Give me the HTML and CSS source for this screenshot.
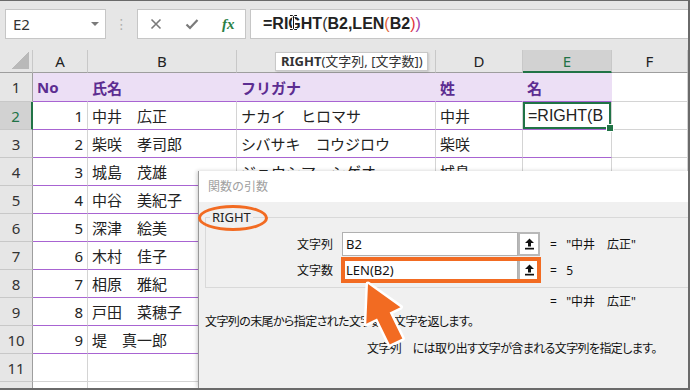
FILE: index.html
```html
<!DOCTYPE html>
<html lang="ja">
<head>
    <meta charset="UTF-8">
    <title>関数の引数 - RIGHT</title>
    <link rel="stylesheet" href="styles.css">
</head>
<body>
<div class="screen">

    <!-- formula bar -->
    <div class="formula-bar">
        <div class="name-box"><span>E2</span><span class="caret"></span></div>
        <div class="grip">⋮</div>
        <div class="fx-box">
            <svg width="12" height="12" viewBox="0 0 12 12"><path d="M1.5 1.5 L10.5 10.5 M10.5 1.5 L1.5 10.5" stroke="#7a7a7a" stroke-width="1.6" fill="none"/></svg>
            <svg width="14" height="12" viewBox="0 0 14 12"><path d="M1.5 6.5 L5 10 L12.5 2" stroke="#7a7a7a" stroke-width="2.2" fill="none"/></svg>
            <span class="fx">fx</span>
        </div>
        <div class="formula-input">=RIGHT<span class="pa">(</span>B2,LEN<span class="pb">(</span>B2<span class="pc">)</span><span class="pd">)</span></div>
    </div>

    <!-- sheet -->
    <div class="sheet">
        <div class="corner"><span class="corner-mark"></span></div>
        <div class="ch">A</div><div class="ch">B</div><div class="ch">C</div><div class="ch">D</div><div class="ch ch-sel">E</div><div class="ch">F</div>

        <div class="rh">1</div>
        <div class="c t">No</div><div class="c t">氏名</div><div class="c t">フリガナ</div><div class="c t">姓</div><div class="c t">名</div><div class="c"></div>

        <div class="rh rh-sel">2</div>
        <div class="c pl n">1</div><div class="c pl">中井　広正</div><div class="c pl">ナカイ　ヒロマサ</div><div class="c pl">中井</div><div class="c pl sel">=RIGHT(B</div><div class="c"></div>

        <div class="rh">3</div>
        <div class="c pl n">2</div><div class="c pl">柴咲　孝司郎</div><div class="c pl">シバサキ　コウジロウ</div><div class="c pl">柴咲</div><div class="c pl"></div><div class="c"></div>

        <div class="rh">4</div>
        <div class="c pl n">3</div><div class="c pl">城島　茂雄</div><div class="c pl">ジョウシマ　シゲオ</div><div class="c pl">城島</div><div class="c pl"></div><div class="c"></div>

        <div class="rh">5</div>
        <div class="c pl n">4</div><div class="c pl">中谷　美紀子</div><div class="c pl">ナカタニ　ミキコ</div><div class="c pl">中谷</div><div class="c pl"></div><div class="c"></div>

        <div class="rh">6</div>
        <div class="c pl n">5</div><div class="c pl">深津　絵美</div><div class="c pl">フカツ　エミ</div><div class="c pl">深津</div><div class="c pl"></div><div class="c"></div>

        <div class="rh">7</div>
        <div class="c pl n">6</div><div class="c pl">木村　佳子</div><div class="c pl">キムラ　ヨシコ</div><div class="c pl">木村</div><div class="c pl"></div><div class="c"></div>

        <div class="rh">8</div>
        <div class="c pl n">7</div><div class="c pl">相原　雅紀</div><div class="c pl">アイハラ　マサキ</div><div class="c pl">相原</div><div class="c pl"></div><div class="c"></div>

        <div class="rh">9</div>
        <div class="c pl n">8</div><div class="c pl">戸田　菜穂子</div><div class="c pl">トダ　ナホコ</div><div class="c pl">戸田</div><div class="c pl"></div><div class="c"></div>

        <div class="rh">10</div>
        <div class="c pl n">9</div><div class="c pl">堤　真一郎</div><div class="c pl">ツツミ　シンイチロウ</div><div class="c pl">堤</div><div class="c pl"></div><div class="c"></div>

        <div class="rh">11</div>
        <div class="c"></div><div class="c"></div><div class="c"></div><div class="c"></div><div class="c"></div><div class="c"></div>

        <div class="rh">12</div>
        <div class="c"></div><div class="c"></div><div class="c"></div><div class="c"></div><div class="c"></div><div class="c"></div>
    </div>

    <!-- function tip under the formula bar -->
    <div class="tip"><b>RIGHT</b>(文字列, [文字数])</div>

    <!-- text cursor -->
    <svg class="ibeam" width="9" height="17" viewBox="0 0 9 17">
        <path d="M1 1.5 H3.5 L4.5 2.5 L5.5 1.5 H8 M4.5 2.5 V14.5 M1 15.5 H3.5 L4.5 14.5 L5.5 15.5 H8" stroke="#fff" stroke-width="3" fill="none"/>
        <path d="M1 1.5 H3.5 L4.5 2.5 L5.5 1.5 H8 M4.5 2.5 V14.5 M1 15.5 H3.5 L4.5 14.5 L5.5 15.5 H8" stroke="#111" stroke-width="1" fill="none"/>
    </svg>

    <!-- function arguments dialog -->
    <div class="dialog">
        <div class="dlg-title">関数の引数</div>
        <div class="dlg-body">
            <div class="group">
                <span class="group-title">RIGHT</span>
                <div class="arg-row">
                    <span class="arg-label">文字列</span>
                    <div class="arg-field">
                        <span class="arg-input">B2</span>
                        <span class="ref-btn"><svg width="11" height="12" viewBox="0 0 11 12"><path d="M5.5 0.5 L10 5 H7 V8.5 H4 V5 H1 Z" fill="#111"/><rect x="1" y="9.8" width="9" height="1.7" fill="#111"/></svg></span>
                    </div>
                    <span class="arg-value">=&nbsp;&nbsp;&nbsp;"中井　広正"</span>
                </div>
                <div class="arg-row">
                    <span class="arg-label">文字数</span>
                    <div class="arg-field focus">
                        <span class="arg-input">LEN(B2)</span>
                        <span class="ref-btn"><svg width="11" height="12" viewBox="0 0 11 12"><path d="M5.5 0.5 L10 5 H7 V8.5 H4 V5 H1 Z" fill="#111"/><rect x="1" y="9.8" width="9" height="1.7" fill="#111"/></svg></span>
                    </div>
                    <span class="arg-value">=&nbsp;&nbsp;&nbsp;5</span>
                </div>
            </div>
            <div class="result">=&nbsp;&nbsp;&nbsp;"中井　広正"</div>
            <p class="desc">文字列の末尾から指定された文字数の文字を返します。</p>
            <p class="arg-desc">文字列　には取り出す文字が含まれる文字列を指定します。</p>
        </div>
    </div>

    <!-- annotations -->
    <div class="ring"></div>
    <svg class="pointer" width="690" height="390" viewBox="0 0 690 390">
        <g transform="translate(368,284) rotate(-26)">
            <path d="M0 0 L19 35 L7 35 L7 64 L-7 64 L-7 35 L-19 35 Z" fill="#f26b22" stroke="#fff" stroke-width="5" stroke-linejoin="round" paint-order="stroke"/>
        </g>
    </svg>
</div>
</body>
</html>
```

FILE: styles.css
```css
* {
    box-sizing: border-box;
}
body {
    margin: 0;
    font-family: "Noto Sans", "Noto Sans CJK JP", sans-serif;
    color: #222;
}
.screen {
    width: 690px;
    height: 390px;
    position: relative;
    overflow: hidden;
    background-color: #e6e6e6;
    border-top: 1px solid #6a6a6a;
    border-right: 2px solid #6a6a6a;
    border-bottom: 2px solid #6a6a6a;
}

/* formula bar */
.formula-bar {
    display: flex;
    align-items: flex-start;
    height: 49px;
    padding: 8px 0 0 5px;
}
.name-box {
    width: 101px;
    height: 30px;
    background-color: #fff;
    border: 1px solid #c6c6c6;
    display: flex;
    align-items: center;
    justify-content: space-between;
    padding: 0 6px 0 7px;
    font-family: "Noto Sans", sans-serif;
    font-size: 15px;
    color: #333;
}
.caret {
    width: 0;
    height: 0;
    border-left: 4px solid transparent;
    border-right: 4px solid transparent;
    border-top: 4px solid #7a7a7a;
}
.grip {
    width: 31px;
    height: 30px;
    text-align: center;
    line-height: 30px;
    color: #b0b0b0;
    font-family: "DejaVu Sans", sans-serif;
    font-size: 14px;
}
.fx-box {
    width: 109px;
    height: 30px;
    background-color: #fff;
    border: 1px solid #c6c6c6;
    display: flex;
    align-items: center;
    gap: 23px;
    padding-left: 12px;
}
.fx {
    font-family: "Liberation Serif", serif;
    font-style: italic;
    font-weight: bold;
    font-size: 15px;
    color: #2a8045;
}
.formula-input {
    flex: 1;
    height: 30px;
    margin-left: 4px;
    background-color: #fff;
    border: 1px solid #c6c6c6;
    border-right: none;
    padding-left: 12px;
    line-height: 28px;
    font-family: "Liberation Sans", sans-serif;
    font-weight: bold;
    font-size: 16px;
    color: #222;
}
.formula-input span {
    font-weight: normal;
}
.pa { color: #333; }
.pb { color: #e0643a; }
.pc { color: #e0343a; }
.pd { color: #a040a8; }

/* sheet */
.sheet {
    display: grid;
    grid-template-columns: 33px 55px 149px 199px 87px 89px 1fr;
    grid-template-rows: 23px 29px repeat(11, 28px);
    font-family: "Noto Sans", "Noto Sans CJK JP", sans-serif;
    font-size: 15px;
}
.corner {
    background-color: #e6e6e6;
    border-right: 1px solid #c8c8c8;
    border-bottom: 1px solid #9e9e9e;
    display: flex;
    align-items: flex-end;
    justify-content: flex-end;
    padding: 0 3px 3px 0;
}
.corner-mark {
    width: 17px;
    height: 17px;
    background: linear-gradient(to bottom right, transparent 50%, #b9b9b9 50%);
}
.ch {
    background-color: #e6e6e6;
    border-right: 1px solid #c8c8c8;
    border-bottom: 1px solid #9e9e9e;
    display: flex;
    align-items: center;
    justify-content: center;
    color: #222;
}
.ch-sel {
    background-color: #d2d2d2;
    color: #217346;
    border-bottom: 2px solid #217346;
}
.rh {
    background-color: #e6e6e6;
    border-right: 1px solid #9e9e9e;
    border-bottom: 1px solid #c8c8c8;
    display: flex;
    align-items: center;
    justify-content: center;
    color: #333;
}
.rh-sel {
    background-color: #d2d2d2;
    color: #217346;
    border-right: 2px solid #217346;
}
.c {
    background-color: #fff;
    border-right: 1px solid #d4d4d4;
    border-bottom: 1px solid #d4d4d4;
    display: flex;
    align-items: center;
    padding: 0 4px;
    white-space: nowrap;
    overflow: hidden;
}
.t {
    background-color: #ecdff5;
    border-right-color: #ecdff5;
    border-bottom-color: #a864d2;
    color: #5c2d91;
    font-weight: bold;
}
.pl {
    border-bottom-color: #a864d2;
}
.n {
    justify-content: flex-end;
}
.sel {
    position: relative;
    overflow: visible;
    box-shadow: inset 0 0 0 2px #217346;
    font-family: "Liberation Sans", sans-serif;
    font-size: 16px;
    padding-left: 5px;
}
.sel::after {
    content: "";
    position: absolute;
    right: -3px;
    bottom: -3px;
    width: 6px;
    height: 6px;
    background-color: #217346;
    border: 1px solid #fff;
}

/* tooltip + cursor */
.tip {
    position: absolute;
    left: 275px;
    top: 51px;
    width: 153px;
    height: 19px;
    background-color: #fff;
    border: 1px solid #c8c8c8;
    box-shadow: 1px 1px 2px rgba(0, 0, 0, 0.15);
    padding-left: 5px;
    font-family: "Noto Sans", "Noto Sans CJK JP", sans-serif;
    font-size: 13px;
    line-height: 17px;
    color: #333;
    white-space: nowrap;
}
.ibeam {
    position: absolute;
    left: 289px;
    top: 13px;
}

/* dialog */
.dialog {
    position: absolute;
    left: 198px;
    top: 170px;
    right: 0;
    bottom: 0;
    background-color: #f0f0f0;
    border-left: 1px solid #9a9a9a;
    box-shadow: -1px 0 4px rgba(0, 0, 0, 0.2);
    font-family: "Noto Sans", "Noto Sans CJK JP", sans-serif;
    font-size: 12px;
    color: #111;
}
.dlg-title {
    height: 31px;
    line-height: 31px;
    padding-left: 9px;
    background-color: #fff;
    color: #a0a0a0;
}
.dlg-body {
    padding: 15px 0 0 6px;
}
.group {
    position: relative;
    height: 71px;
    border: 1px solid #d9d9d9;
    border-right: none;
    padding: 14px 0 5px 0;
}
.group-title {
    position: absolute;
    left: 4px;
    top: -10px;
    padding: 0 2px;
    background-color: #f0f0f0;
    font-size: 13px;
    line-height: 18px;
    color: #222;
}
.arg-row {
    display: flex;
    align-items: center;
    height: 24px;
    margin-bottom: 2px;
}
.arg-label {
    width: 136px;
    padding-right: 9px;
    text-align: right;
}
.arg-field {
    display: flex;
    width: 198px;
    height: 24px;
}
.arg-input {
    flex: 1;
    background-color: #fff;
    border: 1px solid #b0b0b0;
    padding-left: 3px;
    font-size: 13px;
    line-height: 22px;
}
.ref-btn {
    width: 22px;
    height: 24px;
    border: 2px solid #b8b8b8;
    background-color: #fff;
    display: flex;
    align-items: center;
    justify-content: center;
}
.focus {
    outline: 4px solid #f26b22;
    outline-offset: -3px;
}
.arg-value {
    margin-left: 10px;
    white-space: nowrap;
}
.result {
    margin: 6px 0 0 345px;
    line-height: 16px;
    white-space: nowrap;
}
.desc {
    margin: 4px 0 0 0;
    line-height: 16px;
    font-feature-settings: "palt";
    letter-spacing: -0.6px;
    white-space: nowrap;
}
.arg-desc {
    margin: 11px 0 0 162px;
    line-height: 16px;
    font-feature-settings: "palt";
    letter-spacing: -0.6px;
    white-space: nowrap;
}

/* annotations */
.ring {
    position: absolute;
    left: 198px;
    top: 204px;
    width: 70px;
    height: 26px;
    border: 3px solid #f26b22;
    border-radius: 50%;
}
.pointer {
    position: absolute;
    left: 0;
    top: -1px;
    pointer-events: none;
}
```
